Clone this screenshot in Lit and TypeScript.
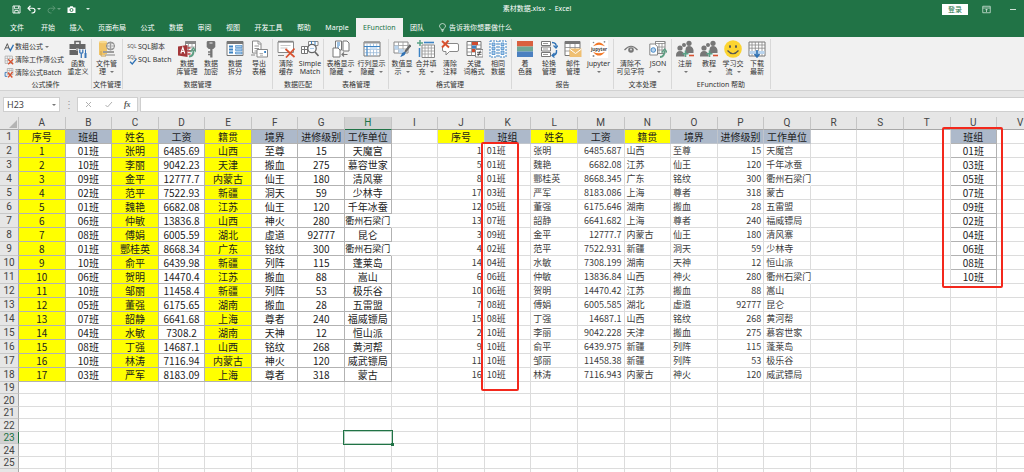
import { LitElement, html, svg, css, nothing, TemplateResult } from "lit";
import { customElement, property } from "lit/decorators.js";
import { classMap } from "lit/directives/class-map.js";

const TABS = ["开始", "插入", "页面布局", "公式", "数据", "审阅", "视图", "开发工具", "帮助", "Marple", "EFunction", "团队"];

const ICONS: Record<string, TemplateResult> = {
  toolbox: svg`<path d="M6 4V1.5h5V4" fill="none" stroke="#666" stroke-width="1.6"/><path d="M0.5 4h16v5H0.500z" fill="#666"/><path d="M0.5 10h9.500v5H0.500z" fill="#666"/><path d="M7 8h3v3H7z" fill="#999"/><path d="M9 9h9v9H9z" fill="#f1f1f1"/><path d="M10.800 9.500v3q1.500 1.500 3 0v-3M12.300 13v5" stroke="#3a76b8" stroke-width="1.300" fill="none"/><path d="M16.500 9.500v4" stroke="#3a76b8" stroke-width="1"/><path d="M16.500 13v5" stroke="#3a76b8" stroke-width="2"/>`,
  files: svg`<path d="M1 2h8v13H1z" fill="#f0c468"/><ellipse cx="5" cy="2" rx="4" ry="1.200" fill="#f7d990"/><circle cx="12.500" cy="6" r="4" fill="#eee" stroke="#888"/><path d="M8.500 6h8M12.500 2v8M10 3.200q2.500 2 5 0M10 8.800q2.500-2 5 0" stroke="#888" stroke-width=".7" fill="none"/><path d="M5 11h11v2H5z" fill="#9c9c9c"/><path d="M7 14h10v2H7z" fill="#bbb"/><path d="M3 11v5h5" stroke="#c8a050" fill="none"/>`,
  access: svg`<path d="M7.500 1.500h10v9h-10z" fill="#fff" stroke="#888"/><path d="M7.500 1h10.500v3H7.500z" fill="#8a8a8a"/><path d="M10.500 4v7M14 4v7M8 7h9" stroke="#999" stroke-width=".8"/><path d="M0 6.500l9.500-1.500v12L0 15.500z" fill="#a4373a"/><path d="M2.800 13.500l2-6 2 6M3.500 11.500h2.600" stroke="#fff" stroke-width="1.100" fill="none"/><path d="M9.500 8h3M9.500 11h3M9.500 14h3" stroke="#b9494c" stroke-width="1.400"/><path d="M11 16.500q4.500 0 4.500-6" stroke="#5d9e82" stroke-width="2" fill="none"/><path d="M12.500 12l3-4 3 4" stroke="#5d9e82" stroke-width="1.400" fill="none"/>`,
  key: svg`<path d="M5.500 1h7l.8 1v5l-2 2h-4.600l-2-2V2z" fill="#757575"/><path d="M7.500 3h3" stroke="#ddd" stroke-width="1.200"/><path d="M8.200 9h2.300v8.500H8.200z" fill="#757575"/><path d="M6 12h3M6 14.500h3" stroke="#757575" stroke-width="1.400"/>`,
  split: svg`<path d="M1 1.500h16v14H1z" fill="#fff" stroke="#777"/><path d="M1 1.500h16v2.500H1z" fill="#777"/><path d="M3 6.500h4M3 9.500h4M3 12.500h4" stroke="#3c83c4" stroke-width="1.800"/><path d="M9.500 5.500h6.500v2H9.500zM9.500 8.700h6.500v2H9.500zM9.500 12h6.500v2H9.500z" fill="#a8cbea" stroke="#3c83c4" stroke-width=".6"/>`,
  exporting: svg`<path d="M2.500 1h6l2.500 2.500V13H2.500z" fill="#fff" stroke="#888"/><path d="M8 1v3h3M4.500 6h4.500M4.500 8.500h4.500M4.500 11h3" stroke="#888" fill="none" stroke-width=".9"/><path d="M7 9.500h10.500v7.500H7z" fill="#fff" stroke="#888"/><path d="M9.500 13.500h3.500M10 15.200h3" stroke="#999" stroke-width=".8"/><path d="M14.200 11h1.800v2h-1.800z" fill="#3c83c4"/><path d="M1 15h4" stroke="#888"/>`,
  clearCache: svg`<path d="M1 2h15.500v10.500H1z" fill="#fff" stroke="#888"/><path d="M1 1.500h15.500" stroke="#888" stroke-width="1.400"/><path d="M3.500 5.500h10M3.500 8h7" stroke="#bbb" stroke-width=".8"/><path d="M1 15.500h6" stroke="#888"/><path d="M8.500 9l9 8M17.500 8.500l-8.500 9" stroke="#d8512f" stroke-width="1.700"/>`,
  match: svg`<path d="M7.500 1.500h9.500v4H7.500z" fill="#fff" stroke="#888"/><path d="M10.500 1v4M14 1v4" stroke="#3c83c4"/><path d="M0.500 6.500h6v3h-6zM0.500 9.500h6v4h-6z" fill="#fff" stroke="#777"/><path d="M3.500 7v7" stroke="#777"/><circle cx="11" cy="8.500" r="4.200" fill="#f8fbff" stroke="#666" stroke-width="1.300"/><path d="M14 12l3.500 4" stroke="#666" stroke-width="1.600"/><path d="M9 8.500h4" stroke="#aac8e4"/>`,
  sheetHide: svg`<path d="M3.500 1h6v9h-6z" fill="#fff" stroke="#777"/><path d="M5 3h3M5 5h3M5 7h2" stroke="#3c83c4"/><path d="M11 1h4l2 2v8h-6z" fill="#fff" stroke="#777"/><path d="M1 8h5l2 2v7H1z" fill="#fff" stroke="#777"/><path d="M10.500 14.500h5M12 12.500l-2 2 2 2" stroke="#777" fill="none" stroke-width="1.200"/>`,
  rowCol: svg`<path d="M1 2h16v14H1z" fill="#fff" stroke="#777"/><path d="M1 1.500h16v2H1z" fill="#999"/><path d="M4 3.500V16M7.300 3.500V16M10.500 3.500V16M13.700 3.500V16M1 6.500h16M1 9.500h16M1 12.700h16" stroke="#9bb9d8" stroke-width=".8"/><path d="M7.300 6.500h6.400v3H7.300z" fill="#cfe2f5"/><path d="M4 6.500v9.500M1 6.500h16" stroke="#3c83c4"/>`,
  brush: svg`<path d="M1 2h14v11H1z" fill="#fff" stroke="#888"/><path d="M5.500 2v11M10 2v11M1 5.500h14M1 9h14" stroke="#999" stroke-width=".8"/><path d="M1.500 5.500h4v4h-4zM5.500 9h5v4h-5z" fill="#b9d4ee"/><path d="M17.500 5l-5.500 7" stroke="#666" stroke-width="2.200"/><path d="M12.500 11.500q1 4-5.500 5.500 1.500-1.500 2-4z" fill="#2f72b5"/>`,
  merge: svg`<path d="M5 5h12.500v12.500H5z" fill="#fff" stroke="#888"/><path d="M8 5v12M11.200 5v12M14.300 5v12M5 8h12M5 11h12M5 14h12" stroke="#999" stroke-width=".8"/><path d="M3 0v6M0 3h6" stroke="#5aa287" stroke-width="1.500"/><path d="M7 2.500h10" stroke="#3c83c4" stroke-width="1.600"/><path d="M2.500 8v9" stroke="#3c83c4" stroke-width="1.500"/>`,
  clearNote: svg`<path d="M3 3.500h13q1.500 0 1.500 1.500v5q0 1.500-1.500 1.500H8.500L5 15v-3.500H3q-1.500 0-1.500-1.500V6" fill="#fff" stroke="#888"/><path d="M1 1l7 6.500M7.500 0.500L1 7.500" stroke="#d8512f" stroke-width="1.900"/>`,
  keyword: svg`<path d="M2 1.500h14v14H2z" fill="#fff" stroke="#777"/><path d="M6.500 1.500v14M11.500 1.500v14M2 5h14M2 8.500h14M2 12h14" stroke="#888" stroke-width=".8"/><path d="M7 2h6v3H7z" fill="#cf4a2e"/><path d="M7 5.500h4v3H7z" fill="#3c83c4"/><path d="M7 9h3v3H7z" fill="#cf4a2e"/><path d="M10.500 9.500h7.500v7.500h-7.500z" fill="#fff" stroke="#888"/><path d="M12 12.300h4.500M12 14.300h4.500M15.500 10.700l-2.500 5.200" stroke="#333" stroke-width=".8"/>`,
  same: svg`<path d="M1 1h7v16H1zM10 1h7v16h-7z" fill="#fff" stroke="#3c83c4" stroke-dasharray="2 1"/><path d="M3 3h3v2.500H3zM3 7h3v2.500H3zM3 11h3v3.500H3zM12 3h3v2.500h-3zM12 7h3v2.500h-3zM12 11h3v3.500h-3z" fill="#a8cbea" stroke="#3c83c4" stroke-width=".7"/>`,
  palette: svg`<path d="M1 1h16v5.500H1z" fill="#d9603f"/><path d="M1 6.500h16v5H1z" fill="#6fa795"/><path d="M1 11.500h16V17H1z" fill="#4b80c0"/>`,
  rotate: svg`<path d="M1.500 1.500h9v4h-9zM1.500 7h9v4h-9zM1.500 12.500h9v4h-9z" fill="#fff" stroke="#777"/><path d="M3 3.500h5M3 9h5M3 14.500h5" stroke="#999"/><path d="M12 2.500q5 0 4 5M16.500 10q.5 5-4 5.500" stroke="#2f72b5" stroke-width="1.400" fill="none"/><path d="M13.500 5.500l2.500 2.500 2-2.500M14.500 13l-2.500 2.500 2.500 2" stroke="#2f72b5" stroke-width="1.200" fill="none"/>`,
  mail: svg`<path d="M1 1.500h15v14H1z" fill="#fff" stroke="#777"/><path d="M1 1h15v3H1z" fill="#777"/><path d="M6 4v11M11 4v11M1 7.500h15M1 11h15" stroke="#888" stroke-width=".8"/><path d="M5.500 8.500h12V17h-12z" fill="#efbf72"/><path d="M5.500 9l6 4.500 6-4.500" stroke="#fff" fill="none"/>`,
  jupyter: svg`<path d="M0 0h18v18H0z" fill="#fff"/><path d="M3 6.300Q9-1.500 15 6.300 9 3 3 6.300zM3 11.700q6 7.800 12 0-6 3.300-12 0z" fill="#f37726"/><text x="9" y="10.500" text-anchor="middle" font-size="4.500" font-weight="700" fill="#444">jupyter</text><circle cx="3.500" cy="2.500" r=".8" fill="#888"/><circle cx="14.500" cy="1.800" r=".9" fill="#888"/><circle cx="3.500" cy="16" r="1" fill="#888"/>`,
  eye: svg`<path d="M2.500 10q6.500-7.500 13 0" fill="none" stroke="#777" stroke-width="1.200"/><circle cx="9" cy="10" r="2.800" fill="#777"/><circle cx="9" cy="9.500" r="1" fill="#ddd"/>`,
  json: svg`<path d="M6.500 1.500h9.500v12H6.500z" fill="#fff" stroke="#888"/><path d="M6.500 1.500h9.500v2H6.500zM10 3v10M13 3v10M7 7h9M7 10h9" fill="none" stroke="#888" stroke-width=".8"/><path d="M0.800 4h5l2.700 2.700V15H0.800z" fill="#fff" stroke="#888"/><circle cx="4.300" cy="10" r="2.300" fill="#b9d4ee" stroke="#3c83c4" stroke-width=".9"/><path d="M11 17q4.500 0 4.500-6" stroke="#5d9e82" stroke-width="1.800" fill="none"/><path d="M12.700 12.500l3-3.500 2.500 3.500" stroke="#5d9e82" stroke-width="1.300" fill="none"/>`,
  people: svg`<g fill="#777"><circle cx="13" cy="3.300" r="2.600"/><path d="M9.500 10q0-4 3.500-4t4.500 4v3h-8z"/><circle cx="8" cy="5" r="2" /><circle cx="4" cy="8" r="2.600"/><path d="M0 15.500q0-4.500 4-4.500t4.500 4.500v1H0z"/></g><path d="M9.500 10.500v6.500M6.500 13.700h6" stroke="#5aa287" stroke-width="1.600"/><path d="M13 15.500h5" stroke="#d8512f" stroke-width="1.600"/>`,
  smile: svg`<circle cx="9" cy="9" r="8.800" fill="#fcd430"/><ellipse cx="6" cy="6.500" rx="1" ry="1.600" fill="#555"/><ellipse cx="12" cy="6.500" rx="1" ry="1.600" fill="#555"/><path d="M3.500 10.500q5.500 6.500 11 0" fill="none" stroke="#555" stroke-width="1.200"/>`,
  download: svg`<path d="M1 2h16v14H1z" fill="#fff" stroke="#777"/><path d="M4 2v14M7.300 2v14M10.600 2v14M14 2v14M1 5h16M1 8.200h16" stroke="#888" stroke-width=".8"/><path d="M1.500 11h15v3h-15z" fill="#b9d4ee"/><path d="M9 10v6M6.500 14L9 17l2.500-3" stroke="#2f72b5" stroke-width="1.600" fill="none"/>`,
  formula: svg`<path d="M1 14L6 3l4 11M3 10.500h6" stroke="#4d4d4d" stroke-width="1.600" fill="none"/><path d="M9.500 12l2 3.500L17 5" stroke="#2f72b5" stroke-width="2.400" fill="none"/>`,
  clearSheet: svg`<path d="M2 2h13v13H2z" fill="#fff" stroke="#888"/><path d="M2 6h13M2 10.500h8M6 2v13M10.500 2v6" stroke="#999"/><path d="M7.500 7.500l9 9M16.500 7.500l-9 9" stroke="#d8512f" stroke-width="2.400"/>`,
  clearBatch: svg`<path d="M6 1h10v11H6z" fill="#fff" stroke="#888"/><path d="M6 4.500h10M9.500 1v11M13 1v11" stroke="#999"/><path d="M5 8H2v7h4" stroke="#2f72b5" stroke-width="1.600" fill="none"/><path d="M7 8l8 9M15.500 7l-8 10" stroke="#d8512f" stroke-width="2.400"/>`,
  sql: svg`<text x="9" y="10" text-anchor="middle" font-size="9" fill="#555">SQL</text>`,
  sqlBatch: svg`<text x="9" y="8" text-anchor="middle" font-size="9" fill="#555">SQL</text><path d="M5.500 12l4 4L17 7" stroke="#2f72b5" stroke-width="2.400" fill="none"/>`,
  save: svg`<path d="M2 2h14v14H2z" fill="none" stroke="#fff" stroke-width="1.800"/><path d="M5 2.500v5h8v-5M5.500 16v-5h7v5" fill="none" stroke="#fff" stroke-width="1.600"/>`,
  undo: svg`<path d="M2 6.500h9q5 0 5 4.500t-5 5H9" fill="none" stroke="#fff" stroke-width="2.200"/><path d="M7 1.500L2 6.500l5 5" fill="none" stroke="#fff" stroke-width="2.200"/>`,
  redo: svg`<path d="M16 6.500H7q-5 0-5 4.500t5 5h2M11 1.500l5 5-5 5" fill="none" stroke="#5c9876" stroke-width="2"/>`,
  camera: svg`<path d="M1 5h4l1.500-2.500h5L13 5h4v11H1z" fill="#fff"/><circle cx="9" cy="10" r="3" fill="none" stroke="#217346" stroke-width="1.800"/>`,
  ribbonMode: svg`<path d="M1.500 2.500h15v13h-15zM1.500 6h15M9 14V8M6.500 10.500L9 8l2.500 2.500" fill="none" stroke="#dcebe2" stroke-width="1.500"/>`,
  bulb: svg`<path d="M6.500 13q0-2-1.800-3.500Q3 8 3 6q0-4.500 6-5 6 .5 6 5 0 2-1.700 3.500T11.500 13zM7 15h4M7.500 17.200h3" fill="none" stroke="#fff" stroke-width="1.300"/>`,
};

const icon = (name: string, cls: string) =>
  html`<svg class=${cls} viewBox="0 0 18 18" aria-hidden="true">${ICONS[name]}</svg>`;

interface Tool { icon: string; lines: [string, string?]; menu?: boolean; size?: "mid" | "wide"; }
interface Group { title: string; small?: { icon: string; text: string; menu?: boolean }[]; tools: Tool[]; }

const GROUPS: Group[] = [
  {
    title: "公式操作",
    small: [
      { icon: "formula", text: "数组公式", menu: true },
      { icon: "clearSheet", text: "清除工作簿公式" },
      { icon: "clearBatch", text: "清除公式Batch" },
    ],
    tools: [{ icon: "toolbox", lines: ["函数", "重定义"] }],
  },
  { title: "文件管理", tools: [{ icon: "files", lines: ["文件管", "理"], menu: true, size: "mid" }] },
  {
    title: "数据管理",
    small: [{ icon: "sql", text: "SQL脚本" }, { icon: "sqlBatch", text: "SQL Batch" }],
    tools: [
      { icon: "access", lines: ["数据", "库管理"] },
      { icon: "key", lines: ["数据", "加密"] },
      { icon: "split", lines: ["数据", "拆分"] },
      { icon: "exporting", lines: ["导出", "表格"] },
    ],
  },
  { title: "数据匹配", tools: [{ icon: "clearCache", lines: ["清除", "缓存"] }, { icon: "match", lines: ["Simple", "Match"] }] },
  {
    title: "表格管理",
    tools: [
      { icon: "sheetHide", lines: ["表格显示", "隐藏"], menu: true, size: "wide" },
      { icon: "rowCol", lines: ["行列显示", "隐藏"], menu: true, size: "wide" },
    ],
  },
  {
    title: "格式管理",
    tools: [
      { icon: "brush", lines: ["数值显", "示"], menu: true },
      { icon: "merge", lines: ["合并填", "充"], menu: true },
      { icon: "clearNote", lines: ["清除", "注释"] },
      { icon: "keyword", lines: ["关键", "词格式"] },
      { icon: "same", lines: ["相同", "数据"] },
    ],
  },
  {
    title: "报告",
    tools: [
      { icon: "palette", lines: ["着", "色器"] },
      { icon: "rotate", lines: ["轮换", "管理"] },
      { icon: "mail", lines: ["邮件", "管理"] },
      { icon: "jupyter", lines: ["jupyter"], menu: true, size: "mid" },
    ],
  },
  {
    title: "文本处理",
    tools: [
      { icon: "eye", lines: ["清除不", "可见字符"], size: "wide" },
      { icon: "json", lines: ["JSON"], menu: true },
    ],
  },
  {
    title: "EFunction 帮助",
    tools: [
      { icon: "people", lines: ["注册"], menu: true },
      { icon: "people", lines: ["教程"], menu: true },
      { icon: "smile", lines: ["学习交", "流"], menu: true },
      { icon: "download", lines: ["下载", "最新"] },
    ],
  },
];

const COLUMNS = "ABCDEFGHIJKLMNOPQRSTUV".split("");
const FIELDS = ["序号", "班组", "姓名", "工资", "籍贯", "境界", "进修级别", "工作单位"];

const SOURCE = `1 01班 张明 6485.69 山西 至尊 15 天魔宫
2 10班 李丽 9042.23 天津 搬血 275 慕容世家
3 09班 金平 12777.7 内蒙古 仙王 180 清风寨
4 02班 范平 7522.93 新疆 洞天 59 少林寺
5 01班 魏艳 6682.08 江苏 仙王 120 千年冰蚕
6 06班 仲敏 13836.8 山西 神火 280 衢州石梁门
7 08班 傅娟 6005.59 湖北 虚道 92777 昆仑
8 01班 酆桂英 8668.34 广东 铭纹 300 衢州石梁门
9 10班 俞平 6439.98 新疆 列阵 115 蓬莱岛
10 06班 贺明 14470.4 江苏 搬血 88 嵩山
11 10班 邹丽 11458.4 新疆 列阵 53 极乐谷
12 05班 董强 6175.65 湖南 搬血 28 五雷盟
13 07班 韶静 6641.68 上海 尊者 240 福威镖局
14 04班 水敏 7308.2 湖南 天神 12 恒山派
15 08班 丁强 14687.1 山西 铭纹 268 黄河帮
16 10班 林涛 7116.94 内蒙古 神火 120 威武镖局
17 03班 严军 8183.09 上海 尊者 318 蒙古`.split("\n").map((l) => l.split(" "));

const SORTED = `1 01班 张明 6485.687 山西 至尊 15 天魔宫
5 01班 魏艳 6682.08 江苏 仙王 120 千年冰蚕
8 01班 酆桂英 8668.345 广东 铭纹 300 衢州石梁门
17 03班 严军 8183.086 上海 尊者 318 蒙古
12 05班 董强 6175.646 湖南 搬血 28 五雷盟
13 07班 韶静 6641.682 上海 尊者 240 福威镖局
3 09班 金平 12777.7 内蒙古 仙王 180 清风寨
4 02班 范平 7522.931 新疆 洞天 59 少林寺
14 04班 水敏 7308.199 湖南 天神 12 恒山派
6 06班 仲敏 13836.84 山西 神火 280 衢州石梁门
10 06班 贺明 14470.42 江苏 搬血 88 嵩山
7 08班 傅娟 6005.585 湖北 虚道 92777 昆仑
15 08班 丁强 14687.1 山西 铭纹 268 黄河帮
2 10班 李丽 9042.228 天津 搬血 275 慕容世家
9 10班 俞平 6439.975 新疆 列阵 115 蓬莱岛
11 10班 邹丽 11458.38 新疆 列阵 53 极乐谷
16 10班 林涛 7116.943 内蒙古 神火 120 威武镖局`.split("\n").map((l) => l.split(" "));

const CLASSES = ["01班", "03班", "05班", "07班", "09班", "02班", "04班", "06班", "08班", "10班"];
const YELLOW = new Set(["序号", "姓名", "籍贯"]);

@customElement("ribbon-bar")
export class RibbonBar extends LitElement {
  static styles = css`
    :host { display: block; background: #f1f1f1; border-bottom: 1px solid #d2d2d2; color: #333; }
    .groups { display: flex; height: 53px; overflow: hidden; }
    .group { display: flex; flex-direction: column; flex: none; margin: 2px 0 1px; padding: 1px 1px 0; border-right: 1px solid #d8d8d8; }
    .tools { display: flex; flex: 1; }
    .title { font-size: 7px; line-height: 9px; text-align: center; white-space: nowrap; }
    button { font: inherit; color: inherit; background: none; border: 0; padding: 0; margin: 0; }
    .stack { display: flex; flex-direction: column; width: 51px; }
    .stack.full { width: 65px; }
    .small { display: flex; align-items: center; gap: 1px; height: 13px; padding-left: 3px; font-size: 7px; line-height: 10px; white-space: nowrap; }
    .icon-s { width: 10px; height: 10px; flex: none; }
    .icon-l { width: 18px; height: 18px; }
    .tool { display: flex; flex-direction: column; align-items: center; width: 24px; font-size: 7px; line-height: 8px; white-space: nowrap; }
    .tool.mid { width: 27px; }
    .tool.wide { width: 31px; }
    .line { display: flex; align-items: center; justify-content: center; gap: 3px; height: 8px; }
    .icon-l + .line { margin-top: 2px; }
    .caret { border: 2px solid transparent; border-top-color: #777; border-bottom: 0; margin-left: 1px; }
    text { font-family: "Noto Sans", sans-serif; }
  `;

  private tool(t: Tool) {
    const caret = t.menu ? html`<span class="caret"></span>` : nothing;
    return html`<button class=${classMap({ tool: true, mid: t.size === "mid", wide: t.size === "wide" })}>
      ${icon(t.icon, "icon-l")}<span class="line">${t.lines[0]}</span><span class="line">${t.lines[1] ?? nothing}${caret}</span>
    </button>`;
  }

  render() {
    return html`<div class="groups" role="toolbar" aria-label="EFunction">
      ${GROUPS.map((g) => html`<section class="group">
        <div class="tools">
          ${g.small ? html`<div class=${classMap({ stack: true, full: g.small.length > 2 })}>
            ${g.small.map((s) => html`<button class="small">${icon(s.icon, "icon-s")}<span>${s.text}</span>${s.menu ? html`<span class="caret"></span>` : nothing}</button>`)}
          </div>` : nothing}
          ${g.tools.map((t) => this.tool(t))}
        </div>
        <div class="title">${g.title}</div>
      </section>`)}
    </div>`;
  }
}

@customElement("sheet-grid")
export class SheetGrid extends LitElement {
  @property({ type: Number }) activeRow = 23;
  @property() activeColumn = "H";

  static styles = css`
    :host { display: block; overflow: hidden; background: #fff; font-family: "Noto Sans CJK SC", sans-serif; }
    table { table-layout: fixed; width: calc(100% + 20px); border-collapse: separate; border-spacing: 0; color: #1c1c1c; }
    .gutter { width: 19px; }
    th, td { box-sizing: border-box; height: 14px; padding: 0; font-size: 10px; line-height: 12px; font-weight: 400; white-space: nowrap; border-right: 1px solid #dcdcdc; border-bottom: 1px solid #dcdcdc; }
    th { font-family: Roboto, sans-serif; }
    thead th { height: 13px; line-height: 12px; background: #e6e6e6; color: #444; border-right-color: #c4c4c4; border-bottom-color: #a8a8a8; }
    tbody th { background: #e6e6e6; color: #444; border-right-color: #a8a8a8; border-bottom-color: #c8c8c8; }
    .corner { border-right-color: #c4c4c4; }
    .corner svg { display: block; width: 8px; height: 8px; margin: 2px 1px 0 auto; }
    thead .on { background: #d2d2d2; color: #217346; border-bottom-color: #217346; }
    tbody .on { background: #d2d2d2; color: #217346; border-right-color: #217346; }
    .short th, .short td { height: 12px; line-height: 11px; }
    .short:nth-child(even) th, .short:nth-child(even) td { height: 13px; }
    td { overflow: hidden; text-align: center; }
    .boxed { border-color: #b2b2b2; }
    .boxed.spill { border-right-color: #fff; font-size: 9px; }
    .yellow { background: #ff0; }
    .blue { background: #adb9ca; }
    .head { border-color: #c0c5cc; }
    .plain { font-size: 9px; color: #3c3c3c; text-align: left; padding-left: 2px; }
    .number { text-align: right; padding: 0 2px 0 0; }
    .plain.spill { overflow: visible; border-right-color: #fff; }
    .anchor { position: relative; overflow: visible; }
    .mark { position: absolute; z-index: 1; box-sizing: border-box; border: 2px solid #f3281c; border-radius: 2px; pointer-events: none; }
    .mark.k { left: -4px; top: -2px; width: 38px; height: 249px; }
    .mark.u { left: -9px; right: -7px; top: -3px; height: 161px; }
    .cursor { position: absolute; inset: -2px; border: 1px solid #217346; outline: 1px solid #b9d2c4; outline-offset: -2px; }
    .handle { position: absolute; right: -2px; bottom: -2px; width: 3px; height: 3px; background: #217346; }
  `;

  private cell(row: number, col: string, index: number) {
    if (row === this.activeRow && col === this.activeColumn)
      return html`<td class="anchor" aria-selected="true"><span class="cursor"><span class="handle"></span></span></td>`;

    if (index < 8 && row <= 18) {
      const text = row === 1 ? FIELDS[index] : SOURCE[row - 2][index];
      const yellow = YELLOW.has(FIELDS[index]);
      return html`<td class=${classMap({ boxed: true, yellow, blue: row === 1 && !yellow, spill: text.length > 4 && index === 7 })}>${text}</td>`;
    }
    if (index >= 9 && index < 17 && row <= 18) {
      const field = index - 9;
      if (row === 1) {
        const yellow = YELLOW.has(FIELDS[field]);
        return html`<td class=${classMap({ head: true, yellow, blue: !yellow })}>${FIELDS[field]}</td>`;
      }
      const text = SORTED[row - 2][field];
      const mark = row === 2 && col === "K";
      return html`<td class=${classMap({ plain: true, number: [0, 3, 6].includes(field), spill: text.length > 4 && field === 7, anchor: mark })}>${text}${mark ? html`<span class="mark k"></span>` : nothing}</td>`;
    }
    if (col === "U" && row <= 11) {
      return row === 1
        ? html`<td class="blue boxed anchor">班组<span class="mark u"></span></td>`
        : html`<td class="boxed">${CLASSES[row - 2]}</td>`;
    }
    return html`<td></td>`;
  }

  render() {
    const rows = Array.from({ length: 25 }, (_, i) => i + 1);
    return html`<table>
      <colgroup><col class="gutter">${COLUMNS.map(() => html`<col>`)}</colgroup>
      <thead><tr>
        <th class="corner"><svg viewBox="0 0 8 8" aria-hidden="true"><path d="M8 0v8H0z" fill="#b4b4b4"/></svg></th>
        ${COLUMNS.map((c) => html`<th scope="col" class=${c === this.activeColumn ? "on" : ""}>${c}</th>`)}
      </tr></thead>
      <tbody>
        ${rows.map((r) => html`<tr class=${r > 18 ? "short" : ""}>
          <th scope="row" class=${r === this.activeRow ? "on" : ""}>${r}</th>
          ${COLUMNS.map((c, i) => this.cell(r, c, i))}
        </tr>`)}
        <tr class="short"><th></th>${COLUMNS.map(() => html`<td></td>`)}</tr>
      </tbody>
    </table>`;
  }
}

@customElement("app-root")
export class AppRoot extends LitElement {
  static styles = css`
    :host { display: flex; flex-direction: column; height: 100vh; overflow: hidden; background: #e6e6e6; font-family: "Noto Sans", "Noto Sans CJK SC", sans-serif; font-size: 7px; }
    button { font: inherit; color: inherit; background: none; border: 0; padding: 0; margin: 0; }
    header { flex: none; background: #217346; color: #fff; }
    .titlebar { display: flex; align-items: center; height: 18px; }
    .quick { display: flex; align-items: center; gap: 6px; padding-left: 12px; }
    .quick button, .window button { display: flex; align-items: center; gap: 1px; }
    .quick button:last-child { padding-left: 4px; }
    .icon { width: 9px; height: 9px; }
    .caret { border: 2px solid transparent; border-top-color: #dcebe2; border-bottom: 0; }
    .dim { opacity: .4; }
    .title { flex: 1; text-align: center; padding-left: 42px; font-size: 7px; line-height: 16px; }
    .window { display: flex; align-items: center; gap: 14px; padding-right: 8px; }
    .window .login { background: #fff; color: #217346; width: 26px; height: 11px; justify-content: center; }
    .minimize { width: 6px; height: 1px; background: #cfe1d6; margin-left: 5px; }
    .menu { display: flex; align-items: stretch; height: 19px; line-height: 19px; }
    .file { width: 34px; }
    nav { display: flex; justify-content: space-between; width: 397px; }
    nav a { color: inherit; text-decoration: none; padding: 0 7px; white-space: nowrap; }
    nav .active { background: #f1f1f1; color: #217346; }
    .tell { display: flex; align-items: center; gap: 2px; margin-left: 7px; }
    ribbon-bar { flex: none; }
    .formula { display: flex; flex: none; align-items: stretch; height: 15px; padding: 6px 0 5px 3px; }
    .box { box-sizing: border-box; display: flex; align-items: center; background: #fff; border: 1px solid #cfcfcf; }
    .name { width: 57px; padding-right: 3px; }
    .name .caret { border-top-color: #777; }
    input { min-width: 0; flex: 1; border: 0; padding: 0 0 0 3px; background: none; outline: 0; font: inherit; font-size: 9px; color: #444; }
    .dots { width: 17px; text-align: center; color: #999; font-size: 10px; line-height: 14px; }
    .actions { width: 61px; justify-content: space-around; margin-right: 2px; padding: 0 1px; }
    .actions button { display: flex; }
    .entry { flex: 1; border-right: 0; }
    .actions .fx { font-family: "Liberation Serif", serif; font-style: italic; font-weight: 700; font-size: 8px; color: #555; }
    sheet-grid { flex: 1; min-height: 0; }
  `;

  render() {
    const caret = html`<span class="caret"></span>`;
    return html`
      <header>
        <div class="titlebar">
          <div class="quick">
            <button aria-label="保存">${icon("save", "icon")}</button>
            <button aria-label="撤消">${icon("undo", "icon")}${caret}</button>
            <button aria-label="恢复">${icon("redo", "icon")}<span class="caret dim"></span></button>
            <button aria-label="照相机">${icon("camera", "icon")}</button>
            <button aria-label="自定义快速访问工具栏">${caret}</button>
          </div>
          <div class="title">素材数据.xlsx&nbsp; -&nbsp; Excel</div>
          <div class="window">
            <button class="login">登录</button>
            <button aria-label="功能区显示选项">${icon("ribbonMode", "icon")}</button>
            <button aria-label="最小化"><span class="minimize"></span></button>
          </div>
        </div>
        <div class="menu">
          <button class="file">文件</button>
          <nav>${TABS.map((t) => html`<a href="#" class=${t === "EFunction" ? "active" : ""}>${t}</a>`)}</nav>
          <button class="tell">${icon("bulb", "icon")}<span>告诉我你想要做什么</span></button>
        </div>
      </header>
      <ribbon-bar></ribbon-bar>
      <div class="formula">
        <div class="box name"><input aria-label="名称框" .value=${"H23"}>${caret}</div>
        <div class="dots">⋮</div>
        <div class="box actions">
          <button aria-label="取消"><svg class="icon" viewBox="0 0 9 9"><path d="M2 2l5 5M7 2L2 7" stroke="#b0b0b0"/></svg></button>
          <button aria-label="输入"><svg class="icon" viewBox="0 0 9 9"><path d="M1.500 5l2 2L8 2" stroke="#b0b0b0" fill="none"/></svg></button>
          <button class="fx" aria-label="插入函数">fx</button>
        </div>
        <div class="box entry"><input aria-label="编辑栏"></div>
      </div>
      <sheet-grid></sheet-grid>
    `;
  }
}
